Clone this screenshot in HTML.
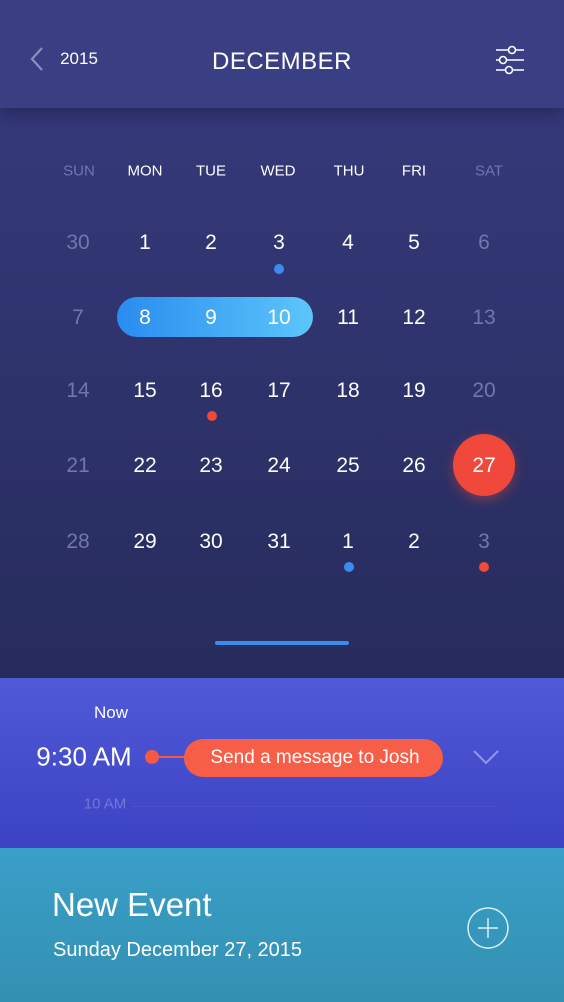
<!DOCTYPE html>
<html><head><meta charset="utf-8"><style>
*{margin:0;padding:0;box-sizing:border-box}
body{width:564px;height:1002px;overflow:hidden;font-family:"Liberation Sans",sans-serif;color:#fff;position:relative;background:#2c3068}
.cal{position:absolute;left:0;top:0;width:564px;height:678px;background:linear-gradient(#373b7f,#272c5c)}
.hdr{position:absolute;left:0;top:0;width:564px;height:108px;background:#3a3e82;box-shadow:0 6px 16px rgba(20,20,60,.45)}
.t{position:absolute;transform:translate(-50%,-50%);white-space:nowrap}
.dim{color:#7276ac}
.dot{position:absolute;width:10px;height:10px;border-radius:50%;transform:translate(-50%,-50%)}
.purple{position:absolute;left:0;top:678px;width:564px;height:170px;background:linear-gradient(#5059d6,#3b43c4)}
.teal{position:absolute;left:0;top:848px;width:564px;height:154px;background:linear-gradient(#3a9fc8,#3390b2)}
</style></head><body>
<div class="cal"></div>
<div class="hdr">
<svg style="position:absolute;left:28px;top:46px" width="18" height="26"><path d="M14 2 L4 13 L14 24" stroke="#8a8fc4" stroke-width="2.2" fill="none"/></svg>
<div class="t" style="left:79px;top:59px;font-size:17px">2015</div>
<div class="t" style="left:282px;top:62px;font-size:24px;letter-spacing:.5px">DECEMBER</div>
<svg style="position:absolute;left:494px;top:44px" width="34" height="32" stroke="#fff" stroke-width="1.6" fill="none"><path d="M2 6H30M2 16H30M2 26H30"/><circle cx="18" cy="6" r="3.5" fill="#3a3e82"/><circle cx="9" cy="16" r="3.5" fill="#3a3e82"/><circle cx="15" cy="26" r="3.5" fill="#3a3e82"/></svg>
</div>
<div style="font-size:15px">
<div class="t dim" style="left:79px;top:171px">SUN</div><div class="t" style="left:145px;top:171px">MON</div><div class="t" style="left:211px;top:171px">TUE</div><div class="t" style="left:278px;top:171px">WED</div><div class="t" style="left:349px;top:171px">THU</div><div class="t" style="left:414px;top:171px">FRI</div><div class="t dim" style="left:489px;top:171px">SAT</div>
</div>
<div style="position:absolute;left:117px;top:297px;width:196px;height:40px;border-radius:20px;background:linear-gradient(90deg,#2a8cf0,#5cc6fa)"></div>
<div style="position:absolute;left:453px;top:434px;width:62px;height:62px;border-radius:50%;background:#f0483a;box-shadow:0 4px 12px rgba(240,72,58,.4)"></div>
<div style="font-size:21px" id="g"></div>
<div class="dot" style="left:279px;top:269px;background:#3a8cf0"></div>
<div class="dot" style="left:212px;top:416px;background:#f04a3a"></div>
<div class="dot" style="left:349px;top:567px;background:#3a8cf0"></div>
<div class="dot" style="left:484px;top:567px;background:#f04a3a"></div>
<div style="position:absolute;left:215px;top:641px;width:134px;height:4px;border-radius:2px;background:#3a8cf0"></div>
<script>
var xs=[78,145,211,279,348,414,484],ys=[243,318,391,466,542];
var d=[[30,1,2,3,4,5,6],[7,8,9,10,11,12,13],[14,15,16,17,18,19,20],[21,22,23,24,25,26,27],[28,29,30,31,1,2,3]];
var h='';for(var r=0;r<5;r++)for(var c=0;c<7;c++){var dim=(c==0||c==6)&&!(r==3&&c==6);h+='<div class="t'+(dim?' dim':'')+'" style="left:'+xs[c]+'px;top:'+ys[r]+'px">'+d[r][c]+'</div>';}
document.getElementById('g').innerHTML=h;
</script>
<div class="purple">
<div class="t" style="left:111px;top:35px;font-size:17px">Now</div>
<div class="t" style="left:84px;top:79px;font-size:26px">9:30 AM</div>
<div style="position:absolute;left:145px;top:72px;width:14px;height:14px;border-radius:50%;background:#f45a44"></div>
<div style="position:absolute;left:155px;top:78px;width:35px;height:2px;background:#f45a44"></div>
<div style="position:absolute;left:184px;top:61px;width:259px;height:38px;border-radius:19px;background:#f65e48"></div>
<div class="t" style="left:315px;top:80px;font-size:19px">Send a message to Josh</div>
<svg style="position:absolute;left:472px;top:70px" width="28" height="18"><path d="M2 3 L14 15 L26 3" stroke="#8f98e8" stroke-width="2" fill="none"/></svg>
<div class="t" style="left:105px;top:126px;font-size:15px;color:#7078d8">10 AM</div>
<div style="position:absolute;left:131px;top:128px;width:365px;height:1px;background:#4a52cc"></div>
</div>
<div class="teal">
<div style="position:absolute;left:52px;top:38px;font-size:33px">New Event</div>
<div style="position:absolute;left:53px;top:91px;font-size:20px">Sunday December 27, 2015</div>
<svg style="position:absolute;left:466px;top:58px" width="44" height="44" stroke="#d8f0f8" fill="none" stroke-width="1.5"><circle cx="22" cy="22" r="20"/><path d="M22 12V32M12 22H32"/></svg>
</div>
</body></html>
